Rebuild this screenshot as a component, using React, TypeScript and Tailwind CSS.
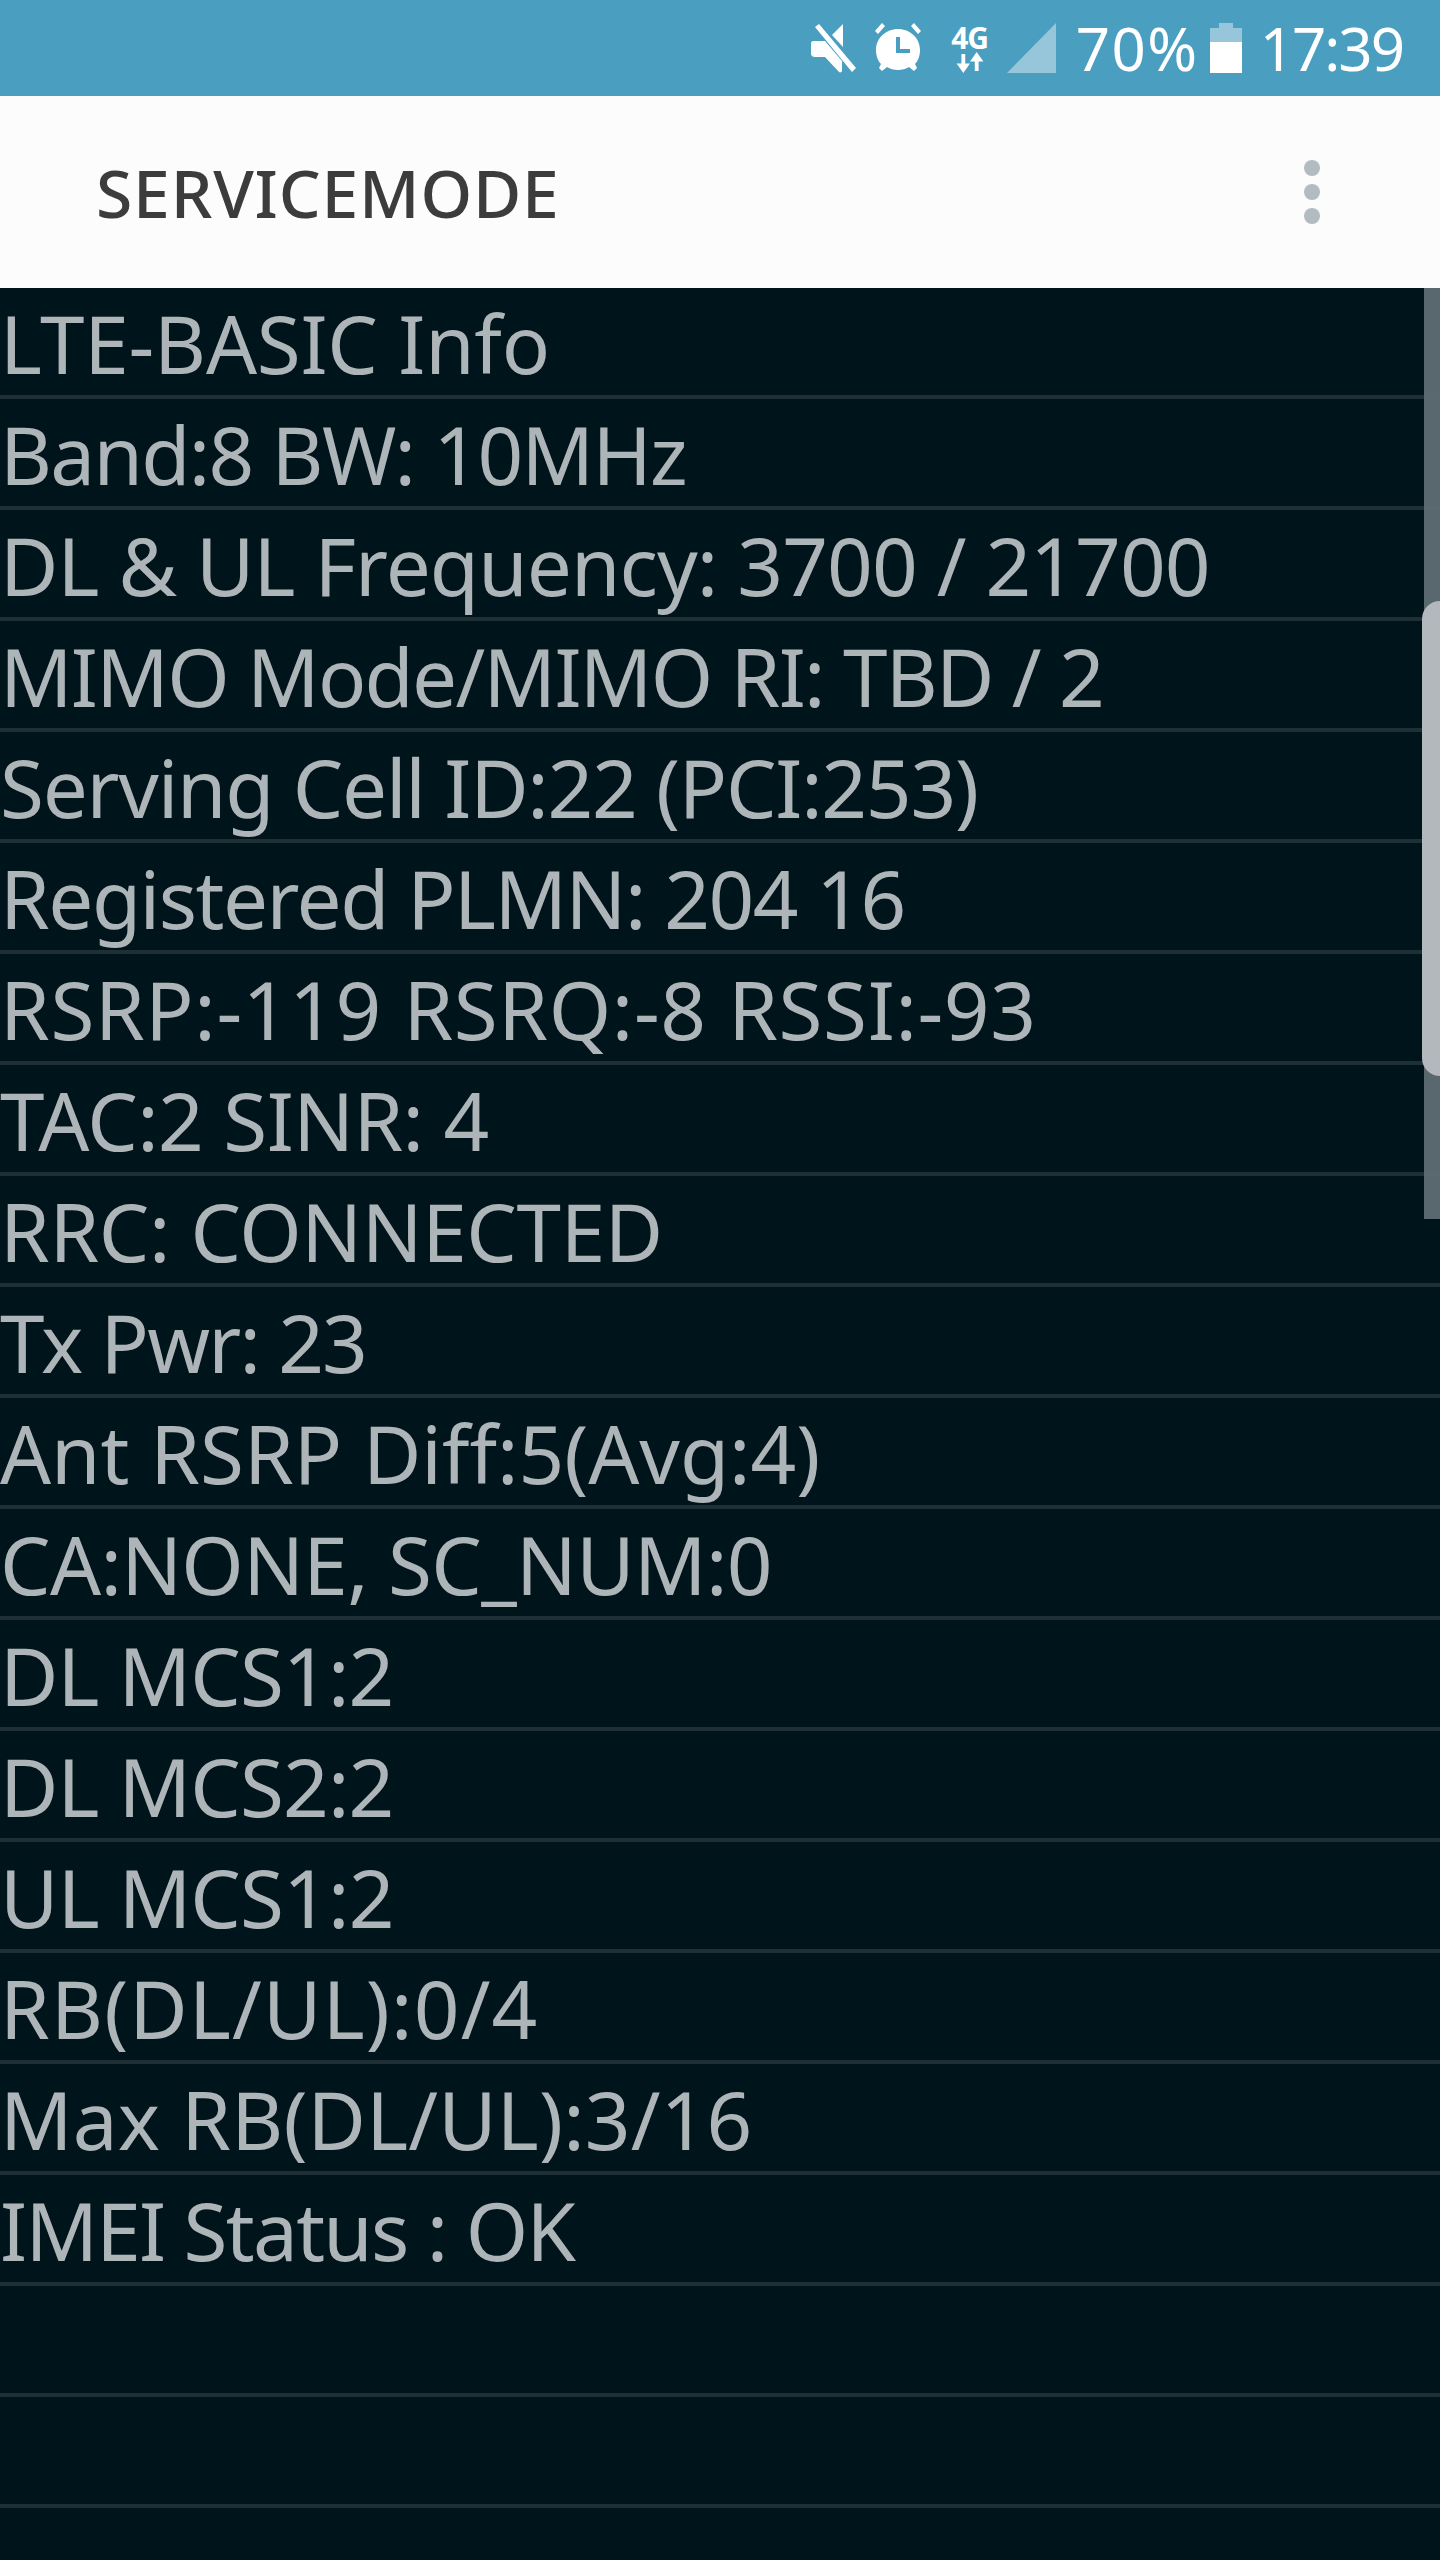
const rows = [
  { text: "LTE-BASIC Info", cls: "tracking-[-0.23px]" },
  { text: "Band:8 BW: 10MHz", cls: "tracking-[-1.7px]" },
  { text: "DL & UL Frequency: 3700 / 21700", cls: "tracking-[-0.9px]" },
  { text: "MIMO Mode/MIMO RI: TBD / 2", cls: "tracking-[-1.7px]" },
  { text: "Serving Cell ID:22 (PCI:253)", cls: "tracking-[-1.25px]" },
  { text: "Registered PLMN: 204 16", cls: "tracking-[-1.49px]" },
  { text: "RSRP:-119 RSRQ:-8 RSSI:-93", cls: "tracking-[0.63px]" },
  { text: "TAC:2 SINR: 4", cls: "tracking-[-0.6px]" },
  { text: "RRC: CONNECTED", cls: "tracking-[-0.35px]" },
  { text: "Tx Pwr: 23", cls: "tracking-[-1.8px]" },
  { text: "Ant RSRP Diff:5(Avg:4)", cls: "tracking-[0px]" },
  { text: "CA:NONE, SC_NUM:0", cls: "tracking-[-0.65px]" },
  { text: "DL MCS1:2", cls: "tracking-[-0.85px]" },
  { text: "DL MCS2:2", cls: "tracking-[-0.85px]" },
  { text: "UL MCS1:2", cls: "tracking-[-0.85px]" },
  { text: "RB(DL/UL):0/4", cls: "tracking-[1.2px]" },
  { text: "Max RB(DL/UL):3/16", cls: "tracking-[0.18px]" },
  { text: "IMEI Status : OK", cls: "tracking-[-1.7px]" },
  { text: "", cls: "" },
  { text: "", cls: "" },
];

function MuteIcon() {
  return (
    <svg width="46" height="50" viewBox="0 0 46 50" fill="#fff">
      <path d="M2 18h7l5 0 17 20v10c0 1-2 2-3 1L14 34H4c-2 0-4-1-4-3V20c0-1 1-2 2-2z" />
      <path d="M21 12 32 1v23z" />
      <path d="M4 4 8 1l37 44-4 4z" />
    </svg>
  );
}

function AlarmIcon() {
  return (
    <svg width="46" height="50" viewBox="0 0 46 50" fill="#fff">
      <path fillRule="evenodd" d="M23 6c12 0 22 9 22 21 0 6-2 11-5 14l2 4-3 3-5-4c-3 2-7 3-11 3s-8-1-11-3l-5 4-3-3 2-4C3 38 1 33 1 27 1 15 11 6 23 6zm-2 8v16h14v-4H25V14z" />
      <path d="M0 8 7 0l3 3-7 8zM46 8l-7-8-3 3 7 8z" />
    </svg>
  );
}

function DataIcon() {
  return (
    <div className="flex w-[38px] flex-col items-center">
      <span className="h-[29px] text-[30px] leading-[29px] font-bold tracking-[-1px] text-white">4G</span>
      <svg width="30" height="21" viewBox="0 0 30 22" fill="#fff">
        <path d="M6 2h4v10h5L8 22 1 12h5zM20 20h4V10h5L22 0l-7 10h5z" />
      </svg>
    </div>
  );
}

function SignalIcon() {
  return (
    <svg width="49" height="50" viewBox="0 0 49 50" fill="#97c5d9">
      <path d="M49 0v50H0z" />
    </svg>
  );
}

function BatteryIcon() {
  return (
    <svg width="32" height="50" viewBox="0 0 32 50">
      <path fill="#97c5d9" d="M9 0h14v5h9v16H0V5h9z" />
      <path fill="#fff" d="M0 19h32v31H0z" />
    </svg>
  );
}

export default function App() {
  return (
    <div className="relative flex h-[2560px] w-[1440px] flex-col overflow-hidden bg-[#00141c] font-['Noto_Sans',sans-serif]">
      <div className="flex h-[96px] items-center justify-end bg-[#4a9fc0] pr-[37px] text-white">
        <div className="flex items-center">
          <MuteIcon />
          <div className="ml-[18px]"><AlarmIcon /></div>
          <div className="ml-[30px]"><DataIcon /></div>
          <div className="ml-[18px]"><SignalIcon /></div>
          <span className="ml-[20px] text-[60px] leading-[50px] tracking-[1.5px]">70%</span>
          <div className="ml-[11px]"><BatteryIcon /></div>
          <span className="ml-[18px] text-[60px] leading-[50px] tracking-[-2px]">17:39</span>
        </div>
      </div>
      <div className="flex h-[192px] items-center justify-between bg-[#fcfcfc] pr-[120px] pl-[96px]">
        <span className="text-[66px] leading-none font-medium tracking-[0.8px] text-[#3c3c3c]">SERVICEMODE</span>
        <div className="flex flex-col gap-[8px]">
          <span className="h-[16px] w-[16px] rounded-full bg-[#b0bbc2]" />
          <span className="h-[16px] w-[16px] rounded-full bg-[#b0bbc2]" />
          <span className="h-[16px] w-[16px] rounded-full bg-[#b0bbc2]" />
        </div>
      </div>
      <div className="flex flex-col">
        {rows.map((row, i) => (
          <div key={i} className={`flex h-[111px] shrink-0 items-center border-b-4 border-[#1e2f36] pt-[2px] text-[80px] leading-none whitespace-pre text-[#aeb5b8] ${row.cls}`}>
            {row.text}
          </div>
        ))}
      </div>
      <div className="absolute top-[288px] right-0 h-[931px] w-[16px] bg-[#5e6b73]/95" />
      <div className="absolute top-[601px] right-0 h-[475px] w-[18px] rounded-l-[18px] bg-[#b3b8bc]" />
    </div>
  );
}
